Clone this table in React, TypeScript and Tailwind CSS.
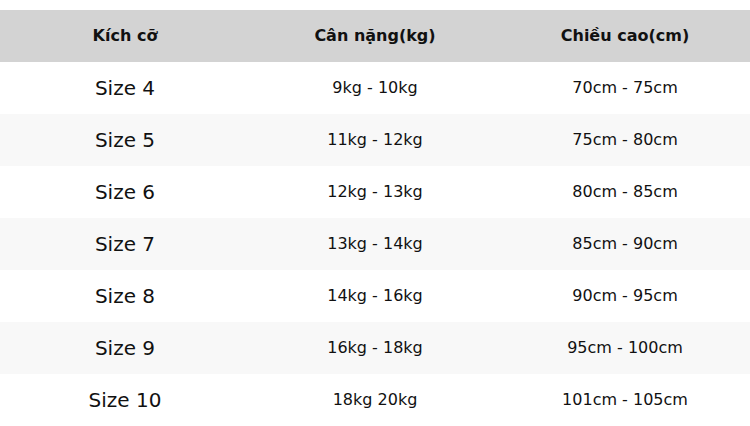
const rows = [
  ['Size 4', '9kg - 10kg', '70cm - 75cm'],
  ['Size 5', '11kg - 12kg', '75cm - 80cm'],
  ['Size 6', '12kg - 13kg', '80cm - 85cm'],
  ['Size 7', '13kg - 14kg', '85cm - 90cm'],
  ['Size 8', '14kg - 16kg', '90cm - 95cm'],
  ['Size 9', '16kg - 18kg', '95cm - 100cm'],
  ['Size 10', '18kg 20kg', '101cm - 105cm'],
];

export default function App() {
  return (
    <div className="w-[750px] h-[426px] bg-white pt-[10px] text-[#111] font-['DejaVu_Sans',sans-serif]">
      <div className="grid grid-cols-3 h-[52px] bg-[#d3d3d3] items-center text-center text-[16px] font-bold">
        <div>Kích cỡ</div>
        <div>Cân nặng(kg)</div>
        <div>Chiều cao(cm)</div>
      </div>
      {rows.map((r, i) => (
        <div
          key={r[0]}
          className={`grid grid-cols-3 h-[52px] items-center text-center ${i % 2 === 1 ? 'bg-[#f8f8f8]' : 'bg-white'}`}
        >
          <div className="text-[20px]">{r[0]}</div>
          <div className="text-[16px]">{r[1]}</div>
          <div className="text-[16px]">{r[2]}</div>
        </div>
      ))}
    </div>
  );
}
